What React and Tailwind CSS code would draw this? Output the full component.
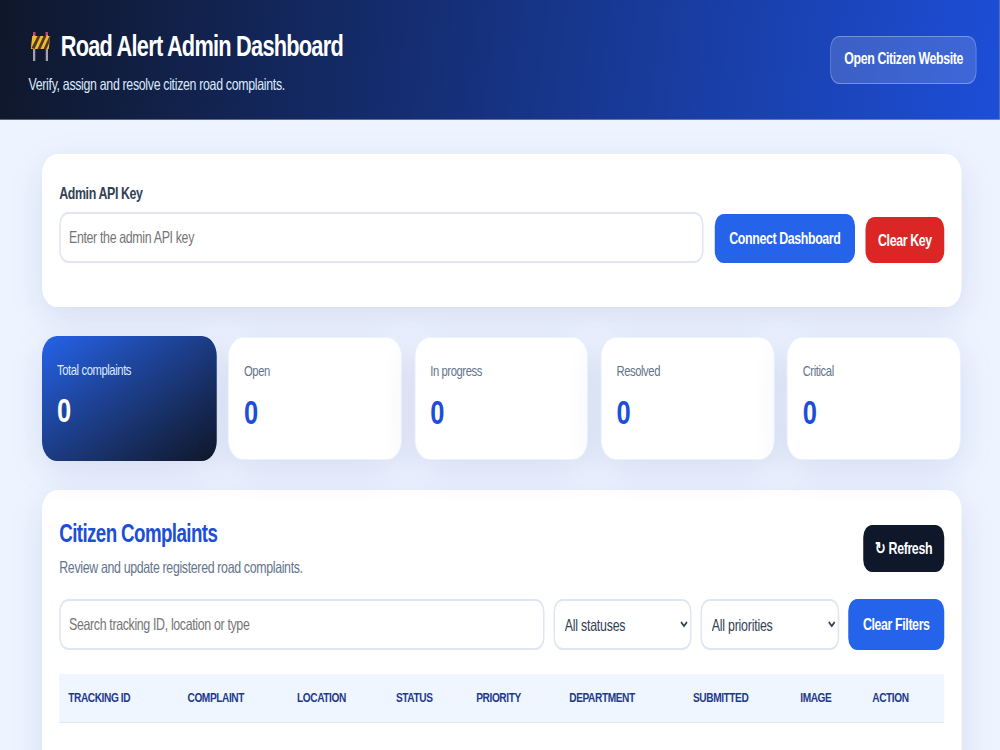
import React from 'react';

const stats = [
    { label: 'Open' },
    { label: 'In progress' },
    { label: 'Resolved' },
    { label: 'Critical' },
];

const columns = ['Tracking ID', 'Complaint', 'Location', 'Status', 'Priority', 'Department', 'Submitted', 'Image', 'Action'];

const BarrierIcon = () => (
    <svg viewBox="0 0 27 30" className="w-[27px] h-[30px] shrink-0 ml-[3px]">
        <rect x="3" y="1" width="3" height="29" fill="#a79fae" />
        <rect x="20" y="1" width="3" height="29" fill="#a79fae" />
        <rect x="3" y="1" width="3" height="3" fill="#c2407a" />
        <rect x="20" y="1" width="3" height="3" fill="#c2407a" />
        <path d="M2 5 L26 5 L24 18 L0 18 Z" fill="#f5b82e" />
        <path d="M1 17 L9 5 L13 5 L5 18 Z M9 18 L17 5 L21 5 L13 18 Z M17 18 L25 5 L26 5 L25 11 L21 18 Z" fill="#4a3c2a" />
    </svg>
);

const App = () => {
    return (
        <div className="w-[1000px] h-[750px] overflow-hidden bg-[#eef4ff]">
            {/* the whole page is narrowed to 75% on x, the reference is a squeezed capture */}
            <div className="w-[1333.33px] origin-top-left scale-x-75 font-['Liberation_Sans',sans-serif]">
                <header className="h-[120px] pl-[38px] pr-[31px] flex items-center justify-between bg-[linear-gradient(100deg,#0f172a,#1d4ed8)] border-b border-[#cbd5e1]/40">
                    <div className="pt-[2px]">
                        <h1 className="flex items-center gap-[13px] text-[29px] tracking-[-1px] leading-[36px] font-bold text-white">
                            <BarrierIcon />
                            Road Alert Admin Dashboard
                        </h1>
                        <p className="mt-[10px] text-[16.5px] tracking-[-0.43px] leading-[20px] text-[#dbeafe]">Verify, assign and resolve citizen road complaints.</p>
                    </div>
                    <button className="w-[195px] h-[48px] pb-[2px] rounded-[12px] border border-white/30 bg-white/15 text-white font-bold text-[16.5px] tracking-[-0.5px]">
                        Open Citizen Website
                    </button>
                </header>

                <main className="pl-[56px] w-[1282px] pt-[34px]">
                    <section className="h-[153px] rounded-[20px] bg-white px-[23px] pt-[28px] shadow-[0_10px_40px_rgba(30,58,138,0.12)]">
                        <label className="block text-[16.5px] tracking-[-0.5px] leading-[22px] font-bold text-[#334155] mb-[8px]">Admin API Key</label>
                        <div className="flex items-end gap-[14px]">
                            <input placeholder="Enter the admin API key" className="flex-1 h-[51px] rounded-[12px] border-2 border-[#dfe6f1] px-[11px] text-[16.5px] tracking-[-0.45px] placeholder:text-[#757575] outline-none" />
                            <button className="ml-[1px] w-[187px] h-[49px] rounded-[12px] bg-[#2563eb] text-white font-bold text-[16.5px] tracking-[-0.5px]">Connect Dashboard</button>
                            <button className="w-[105px] h-[46px] rounded-[12px] bg-[#dc2626] text-white font-bold text-[16.5px] tracking-[-0.5px]">Clear Key</button>
                        </div>
                    </section>

                    <section className="mt-[30px] mr-[1px] grid grid-cols-5 gap-[16.5px]">
                        <div className="h-[125px] -mt-[1px] -mr-[1px] rounded-[20px] px-[20px] pt-[24px] bg-gradient-to-br from-[#2563eb] to-[#0f172a] shadow-[0_10px_40px_rgba(30,58,138,0.12)]">
                            <p className="text-[15px] tracking-[-0.55px] leading-[20px] text-[#dbeafe]">Total complaints</p>
                            <p className="mt-[10px] text-[34px] leading-[40px] font-bold text-white">0</p>
                        </div>
                        {stats.map((stat) => (
                            <div key={stat.label} className="h-[123px] rounded-[20px] px-[20px] pt-[23px] bg-white border border-[#eaf1ff] shadow-[0_10px_40px_rgba(30,58,138,0.12)]">
                                <p className="text-[15px] tracking-[-0.55px] leading-[20px] text-[#64748b]">{stat.label}</p>
                                <p className="mt-[11px] text-[34px] leading-[40px] font-bold text-[#1d4ed8]">0</p>
                            </div>
                        ))}
                    </section>

                    <section className="mt-[29px] h-[300px] rounded-[20px] bg-white px-[23px] pt-[27px] shadow-[0_10px_40px_rgba(30,58,138,0.12)]">
                        <div className="flex items-start justify-between">
                            <div>
                                <h2 className="text-[25px] tracking-[-0.8px] leading-[32px] font-bold text-[#1d4ed8]">Citizen Complaints</h2>
                                <p className="mt-[8px] text-[16.5px] tracking-[-0.45px] leading-[20px] text-[#64748b]">Review and update registered road complaints.</p>
                            </div>
                            <button className="w-[108px] h-[47px] mt-[8px] rounded-[12px] bg-[#0f172a] text-white font-bold text-[16.5px] tracking-[-0.5px]">↻ Refresh</button>
                        </div>

                        <div className="mt-[22px] flex gap-[12px]">
                            <input placeholder="Search tracking ID, location or type" className="flex-1 h-[51px] rounded-[12px] border-2 border-[#dfe6f1] px-[11px] text-[16.5px] tracking-[-0.45px] placeholder:text-[#757575] outline-none" />
                            <select className="w-[184px] h-[51px] rounded-[12px] border-2 border-[#dfe6f1] pl-[9px] pr-[12px] text-[16.5px] tracking-[-0.3px] text-[#334155] bg-white outline-none">
                                <option>All statuses</option>
                            </select>
                            <select className="w-[185px] h-[51px] rounded-[12px] border-2 border-[#dfe6f1] pl-[9px] pr-[12px] text-[16.5px] tracking-[-0.3px] text-[#334155] bg-white outline-none">
                                <option>All priorities</option>
                            </select>
                            <button className="w-[128px] h-[51px] rounded-[12px] bg-[#2563eb] text-white font-bold text-[16.5px] tracking-[-0.5px]">Clear Filters</button>
                        </div>

                        <div className="mt-[24px] h-[49px] pl-[12px] grid grid-cols-[159px_146px_132px_107px_124px_165px_143px_96px_1fr] items-center bg-[#eff6ff] border-b border-[#e2e8f0]">
                            {columns.map((col) => (
                                <span key={col} className="text-[13.5px] tracking-[-0.55px] font-bold uppercase text-[#1e3a8a]">{col}</span>
                            ))}
                        </div>
                    </section>
                </main>
            </div>
        </div>
    );
};

export default App;
